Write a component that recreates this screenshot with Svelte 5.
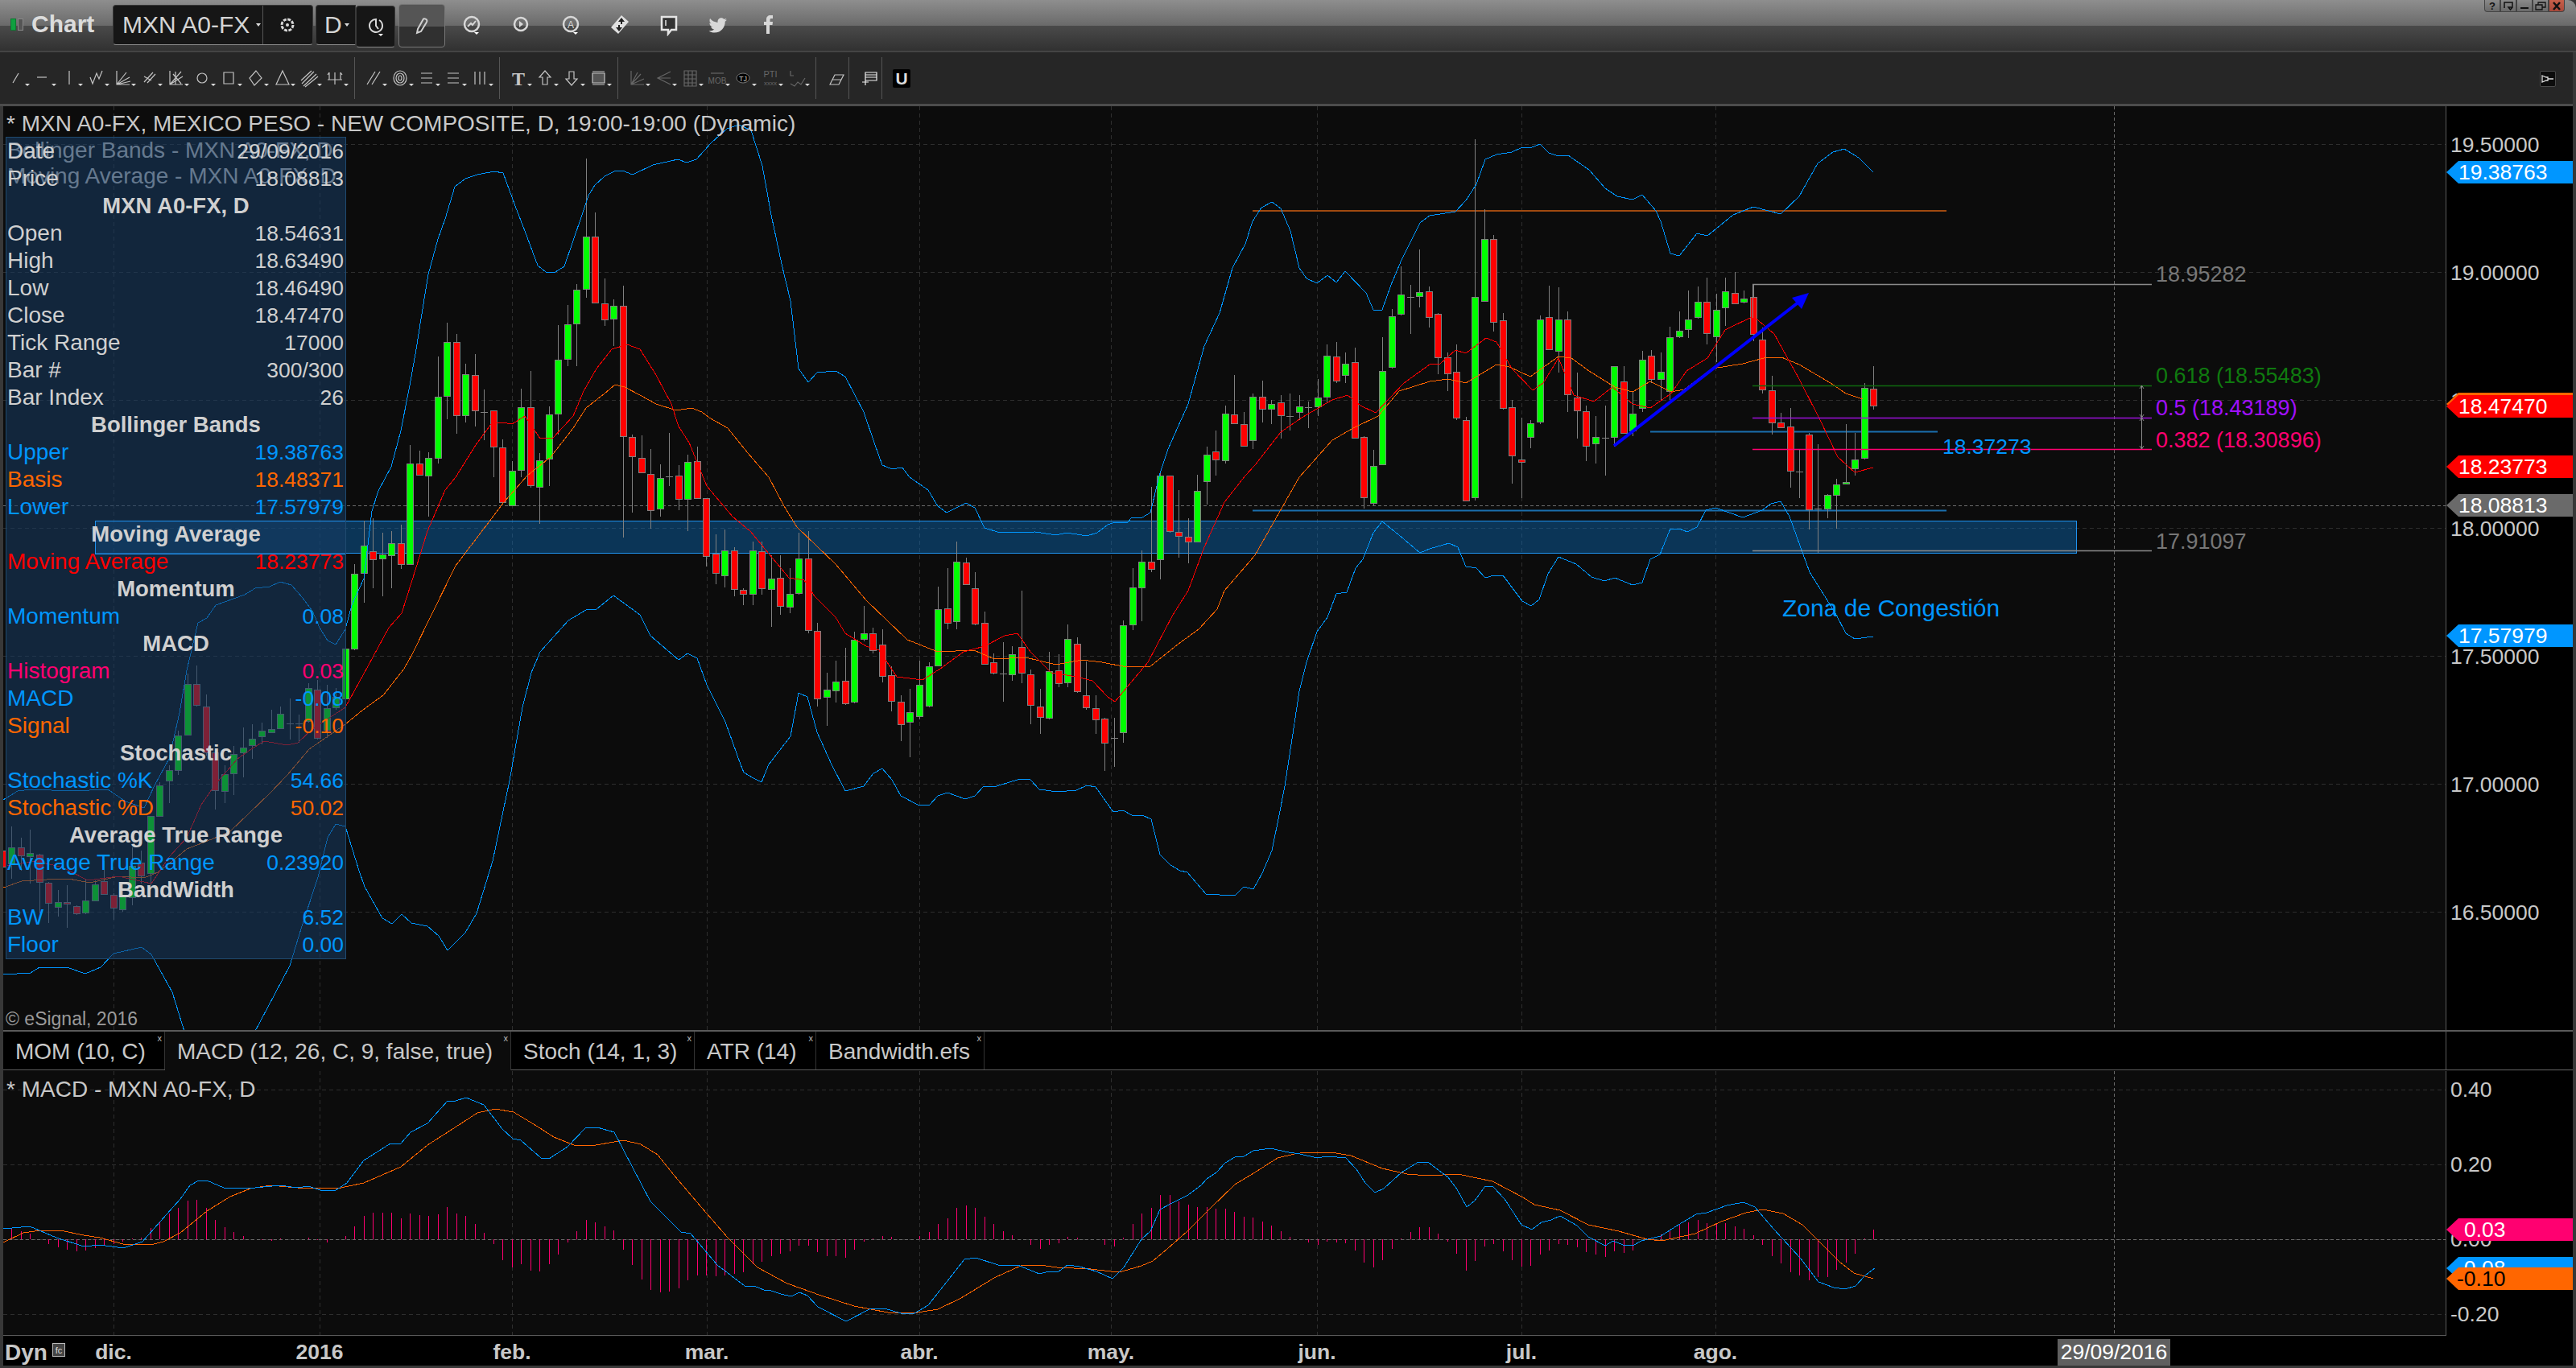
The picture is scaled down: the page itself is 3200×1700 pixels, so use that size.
<script>
  // x of bar n on the time axis
  const barX = (i) => Math.round(2.8 + 11.507 * i);

  // [top, bottom, high, low, g/r/f] read off the reference at 2.45 and 1.96 px per px
  const left = [
    [900,950,860,960,'r'],[890,940,825,985,'g'],[890,915,860,960,'r'],[907,917,835,1000,'g'],[912,995,910,1090,'r'],
    [998,1060,995,1120,'r'],[1057,1072,1020,1100,'g'],[1057,1062,1005,1135,'r'],[1067,1090,1065,1095,'r'],[1052,1088,985,1092,'g'],
    [1002,1050,990,1052,'g'],[993,1033,930,1035,'r'],[1035,1075,1030,1110,'r'],[1040,1080,1000,1085,'g'],[945,1040,890,1065,'g'],
    [935,973,900,1000,'r'],[795,968,795,1005,'g'],[700,793,690,795,'g'],[655,687,640,755,'g'],[550,655,535,670,'g'],
    [393,547,360,550,'g'],[393,457,335,460,'r'],[460,600,425,610,'r'],[600,716,600,775,'r'],[667,718,640,755,'g'],
    [605,665,580,730,'g'],[585,600,525,675,'g'],[558,578,515,620,'g'],[535,552,510,575,'g'],[528,538,470,540,'g'],
    [483,526,460,530,'g'],[513,513,435,560,'f'],[513,513,485,570,'f'],[405,505,390,510,'g'],[410,557,380,560,'r'],
    [465,530,395,555,'g'],[430,463,405,470,'g'],[285,438,280,440,'g']
  ].map((c) => [...c.slice(0, 4).map((v) => 690 + v / 2.45), c[4]]);

  const rest = [
    [1065,1248,1040,1250,'g'],[995,1062,935,1135,'g'],[1010,1030,930,1100,'r'],[1017,1026,965,1120,'g'],[990,1020,960,1100,'g'],
    [990,1040,945,1052,'r'],[795,1040,750,1042,'g'],[795,822,765,825,'r'],[783,826,768,925,'g'],[633,782,535,795,'g'],
    [500,632,453,688,'g'],[500,678,480,723,'r'],[579,678,553,695,'g'],[581,668,530,705,'r'],[670,670,615,738,'f'],
    [667,756,690,830,'r'],[756,890,736,892,'r'],[814,898,790,900,'g'],[659,812,613,830,'g'],[659,850,570,855,'r'],
    [787,852,770,942,'g'],[677,785,657,850,'g'],[542,673,458,725,'g'],[456,540,410,558,'g'],[372,454,358,558,'g'],
    [243,370,52,392,'g'],[243,403,185,405,'r'],[405,444,345,460,'r'],[411,442,395,510,'g'],[411,728,362,977,'r'],
    [732,780,725,915,'r'],[783,818,728,820,'r'],[822,910,760,955,'r'],[832,907,798,925,'g'],[827,827,722,850,'f'],
    [826,882,800,910,'r'],[791,882,775,960,'g'],[789,880,755,882,'r'],[881,1023,881,1047,'r'],[1015,1062,968,1090,'r'],
    [1008,1068,957,1098,'g'],[1008,1102,1000,1120,'r'],[1104,1114,1100,1140,'r'],[1008,1114,985,1140,'g'],[1010,1100,985,1115,'r'],
    [1077,1102,1020,1193,'g'],[1075,1143,1020,1165,'r'],[1114,1146,1050,1160,'g'],[1028,1112,965,1115,'g'],[1028,1202,960,1210,'r'],
    [1204,1368,1183,1388,'r'],[1346,1364,1305,1435,'g'],[1326,1348,1276,1378,'g'],[1324,1378,1245,1383,'r'],[1225,1375,1205,1380,'g'],
    [1210,1224,1143,1228,'g'],[1210,1252,1195,1258,'r'],[1236,1312,1200,1328,'r'],[1312,1374,1290,1400,'r'],[1375,1430,1360,1472,'r'],
    [1402,1426,1345,1512,'g'],[1334,1410,1275,1420,'g'],[1289,1385,1280,1390,'g'],[1150,1287,1095,1290,'g'],[1148,1183,1050,1200,'r'],
    [1034,1180,985,1200,'g'],[1036,1088,1025,1090,'r'],[1099,1186,1060,1190,'r'],[1183,1282,1156,1285,'r'],[1280,1306,1258,1310,'r'],
    [1308,1308,1230,1375,'f'],[1261,1310,1240,1325,'g'],[1242,1304,1105,1330,'r'],[1310,1385,1298,1430,'r'],[1387,1412,1345,1455,'r'],
    [1302,1416,1255,1420,'g'],[1300,1332,1260,1340,'r'],[1224,1330,1188,1340,'g'],[1234,1350,1220,1355,'r'],[1360,1390,1278,1395,'r'],
    [1391,1418,1360,1455,'r'],[1418,1476,1415,1545,'r'],[1464,1464,1415,1535,'f'],[1190,1450,1178,1475,'g'],
    [1097,1188,1050,1202,'g'],[1034,1097,1008,1180,'g'],[1034,1052,852,1060,'r'],[826,1030,820,1078,'g'],[826,962,826,964,'r'],
    [963,973,860,1025,'r'],[975,987,930,1038,'r'],[863,987,823,987,'g'],[775,840,755,895,'g'],[767,787,715,825,'r'],
    [675,789,655,795,'g'],[677,698,580,700,'r'],[700,752,670,755,'r'],[634,740,625,760,'g'],[634,663,593,695,'r'],
    [650,661,640,700,'g'],[646,677,630,735,'r'],[681,681,625,715,'f'],[656,669,630,690,'g'],[658,658,645,710,'f'],
    [636,658,590,680,'g'],[534,634,505,648,'g'],[536,595,500,600,'r'],[552,579,525,600,'g'],[548,732,513,735,'r'],
    [732,879,730,905,'r'],[801,891,763,898,'g'],[571,799,488,800,'g'],[438,562,420,565,'g'],[385,432,315,435,'g'],
    [391,391,360,480,'f'],[379,389,275,415,'g'],[377,439,365,465,'r'],[432,538,430,578,'r'],[538,577,525,620,'r'],
    [573,685,505,690,'r'],[689,885,682,887,'r'],[391,880,5,885,'g'],[248,398,177,400,'g'],[248,450,240,475,'r'],
    [446,660,430,665,'r'],[658,775,640,845,'r'],[785,791,685,880,'r'],[697,730,690,758,'g'],[444,693,435,700,'g'],
    [440,518,363,520,'r'],[444,520,367,575,'g'],[444,626,425,670,'r'],[636,667,575,735,'r'],[669,754,655,790,'r'],
    [731,746,680,795,'g'],[733,733,655,825,'f'],[558,730,558,755,'g'],[595,720,558,722,'r'],[675,717,620,730,'g'],
    [542,660,522,670,'g'],[534,590,520,600,'r'],[573,591,525,640,'g'],[489,621,463,640,'g'],[473,487,425,490,'g'],
    [445,469,375,490,'g'],[402,440,365,442,'g'],[401,478,343,505,'r'],[422,487,382,548,'g'],[377,417,343,460,'g'],
    [381,407,330,408,'r'],[393,401,375,405,'g'],[391,481,360,497,'r'],[493,614,465,625,'r'],[618,696,582,725,'r'],
    [695,707,672,710,'r'],[705,812,660,855,'r'],[815,815,760,880,'f'],[726,908,722,957,'r'],[906,906,748,1013,'f'],
    [873,907,870,930,'g'],[846,871,833,955,'g'],[840,844,700,845,'g'],[785,807,722,825,'g'],[612,783,600,785,'g'],
    [614,656,558,665,'r']
  ].map((c) => [...c.slice(0, 4).map((v) => 170 + v / 1.96), c[4]]);

  const candles = [...left, ...rest].map(([top, bot, hi, lo, kind], i) => ({
    x: barX(i),
    top: Math.round(top),
    h: Math.max(Math.round(bot - top), 1),
    hi: Math.round(hi),
    lo: Math.round(lo),
    kind
  }));

  const upper = '4,994 22,983 38,981 89,983 134,981 156,996 179,1004 192,976 210,943 223,886 232,833 246,774 257,768 268,752 304,739 317,731 335,729 348,723 362,727 376,743 388,759 397,780 407,796 417,801 429,782 437,752 452,719 462,635 470,610 486,580 498,535 509,479 517,434 523,396 532,341 544,297 553,272 565,232 578,222 593,217 614,213 625,215 640,256 652,287 668,330 678,338 690,338 701,331 722,270 731,243 739,230 751,219 763,213 773,212 786,217 811,205 842,198 853,202 865,198 884,177 903,160 918,155 933,162 947,206 958,267 971,328 982,374 992,458 1004,475 1015,463 1038,461 1050,468 1073,512 1086,550 1096,578 1108,583 1121,581 1130,593 1153,609 1165,629 1176,637 1200,625 1211,631 1223,656 1242,662 1286,661 1312,665 1325,662 1350,666 1363,662 1376,652 1385,649 1400,650 1406,643 1419,643 1429,637 1441,588 1451,558 1476,502 1496,430 1515,389 1531,333 1547,303 1556,275 1567,258 1580,251 1591,259 1603,287 1614,333 1623,346 1636,352 1649,342 1660,351 1671,337 1697,364 1706,385 1717,385 1728,354 1741,323 1764,277 1776,268 1808,263 1821,249 1834,229 1845,198 1859,192 1878,189 1891,183 1901,184 1913,179 1924,190 1936,194 1948,193 1974,211 1994,234 2009,244 2028,248 2040,242 2057,262 2063,275 2075,315 2086,318 2108,290 2121,293 2153,267 2178,257 2212,266 2235,244 2258,203 2277,189 2291,185 2309,196 2327,214';
  const lower = '4,1211 38,1209 49,1202 83,1202 106,1210 125,1202 141,1185 176,1177 188,1186 214,1233 230,1285 315,1285 360,1200 375,1151 395,1090 407,1041 417,1024 429,1027 446,1082 453,1102 475,1141 487,1148 499,1136 511,1147 531,1151 545,1163 556,1181 578,1159 592,1135 612,1070 633,970 649,879 660,836 671,810 706,771 728,758 741,757 762,740 795,764 808,790 843,820 854,812 866,818 878,851 901,897 920,950 924,960 936,967 946,972 955,950 968,933 982,915 992,861 1003,866 1015,910 1033,950 1050,983 1073,977 1085,961 1096,955 1108,969 1119,989 1140,1000 1154,1001 1165,989 1177,985 1199,993 1211,989 1222,977 1235,978 1257,971 1268,968 1280,969 1291,981 1314,984 1337,982 1350,976 1361,978 1383,1009 1395,1007 1406,1013 1419,1013 1430,1018 1441,1062 1454,1075 1466,1082 1475,1084 1498,1111 1515,1112 1534,1113 1545,1102 1557,1105 1568,1085 1580,1057 1589,1013 1596,977 1604,925 1614,859 1623,823 1636,785 1649,767 1660,738 1673,736 1684,706 1693,695 1706,662 1717,648 1738,665 1764,687 1776,682 1800,675 1811,680 1821,704 1834,706 1845,718 1856,715 1867,715 1891,747 1902,753 1912,745 1923,713 1936,692 1958,701 1977,717 1993,722 2006,718 2028,727 2040,724 2050,695 2062,689 2075,657 2086,657 2096,661 2108,655 2119,634 2131,631 2165,643 2189,634 2200,626 2212,623 2223,642 2248,711 2280,762 2293,787 2304,794 2327,791';
  const basis = '4,1103 27,1095 58,1093 85,1092 112,1097 147,1089 179,1091 196,1084 214,1070 232,1055 263,1043 286,1033 308,1012 335,986 357,963 384,931 429,900 451,882 476,864 502,831 512,813 537,762 566,703 601,657 626,624 655,591 684,568 712,532 728,507 751,489 764,478 776,481 795,491 815,502 840,510 859,507 872,512 881,519 904,532 929,563 955,593 974,629 990,655 1038,701 1076,746 1127,795 1165,810 1210,808 1235,819 1274,817 1312,826 1344,820 1369,823 1400,829 1429,828 1464,800 1489,782 1512,757 1521,734 1559,690 1585,644 1614,593 1655,547 1681,532 1712,517 1738,486 1776,474 1799,471 1821,476 1859,453 1875,456 1901,468 1936,443 1952,445 1974,461 2006,481 2028,487 2050,474 2076,487 2092,484 2127,458 2165,452 2191,445 2213,444 2235,453 2274,476 2293,489 2314,496';
  const average = '9,1076 45,1070 78,1078 109,1094 147,1089 188,1098 210,1065 232,1041 250,1000 268,974 295,943 312,931 328,921 357,926 370,923 388,906 429,879 457,828 483,780 499,762 512,721 531,660 553,609 566,593 591,553 610,527 623,525 636,527 652,517 671,545 687,544 712,517 725,486 741,458 760,434 779,428 795,434 815,466 834,502 843,530 856,550 878,604 910,642 932,660 955,688 980,718 999,721 1012,741 1038,767 1050,787 1076,803 1092,808 1114,841 1146,845 1168,831 1197,810 1223,803 1248,790 1264,787 1280,810 1306,836 1337,841 1357,846 1376,866 1385,872 1400,854 1426,823 1457,764 1476,734 1496,680 1521,624 1547,591 1559,578 1591,537 1617,519 1655,497 1674,491 1690,504 1709,513 1744,476 1776,453 1789,452 1808,435 1821,439 1846,420 1859,425 1878,458 1904,485 1917,476 1936,445 1955,491 1980,499 2003,481 2028,502 2050,507 2076,489 2095,461 2121,445 2143,410 2178,393 2204,415 2235,471 2261,522 2283,568 2304,587 2327,581';

  const macd = '4,1527 37,1524 70,1538 104,1549 124,1547 153,1551 177,1543 199,1518 224,1490 236,1473 247,1467 257,1467 278,1476 307,1477 348,1473 369,1476 383,1474 398,1479 417,1479 431,1470 452,1442 485,1421 498,1421 510,1407 531,1396 556,1368 566,1368 579,1364 601,1373 624,1403 637,1415 647,1417 672,1439 682,1440 705,1425 728,1401 742,1401 763,1407 808,1493 846,1531 858,1533 891,1572 925,1598 937,1598 949,1603 958,1604 970,1608 983,1611 993,1606 1003,1610 1016,1624 1051,1642 1082,1626 1099,1626 1119,1632 1136,1632 1153,1622 1176,1593 1198,1565 1212,1563 1240,1572 1264,1572 1291,1583 1303,1580 1315,1580 1326,1572 1341,1574 1362,1580 1382,1589 1396,1575 1418,1540 1429,1530 1441,1503 1454,1496 1476,1485 1492,1473 1499,1465 1511,1457 1522,1445 1534,1438 1545,1437 1557,1430 1578,1427 1601,1432 1615,1434 1636,1439 1649,1437 1661,1438 1671,1438 1685,1453 1696,1470 1708,1482 1719,1477 1741,1457 1762,1444 1775,1445 1799,1463 1810,1478 1822,1500 1832,1492 1845,1474 1855,1475 1869,1490 1890,1522 1903,1528 1915,1519 1927,1516 1938,1511 1959,1523 1973,1537 1994,1548 2004,1542 2016,1547 2028,1548 2039,1542 2063,1536 2085,1522 2107,1509 2120,1507 2145,1498 2166,1494 2180,1500 2203,1527 2236,1563 2259,1593 2278,1600 2292,1602 2305,1598 2317,1585 2329,1576';
  const signal = '4,1544 29,1532 50,1529 75,1529 104,1535 124,1538 153,1546 187,1547 203,1543 224,1532 257,1505 286,1487 311,1477 336,1473 369,1476 419,1477 452,1470 498,1450 531,1423 556,1407 593,1383 615,1378 638,1382 663,1397 688,1413 713,1423 734,1424 775,1417 796,1422 817,1435 837,1460 871,1500 904,1538 941,1575 978,1595 1020,1610 1061,1623 1103,1631 1140,1631 1165,1627 1194,1613 1235,1588 1268,1573 1282,1572 1292,1572 1313,1575 1355,1577 1380,1580 1394,1580 1418,1573 1432,1567 1450,1552 1475,1530 1503,1502 1534,1472 1562,1455 1587,1439 1608,1434 1622,1432 1654,1432 1678,1436 1717,1452 1748,1459 1773,1461 1811,1459 1854,1468 1892,1488 1906,1497 1938,1504 1973,1522 2011,1530 2046,1540 2064,1542 2106,1533 2138,1518 2169,1507 2190,1503 2215,1508 2239,1522 2260,1543 2285,1568 2303,1582 2327,1589';

  // histogram height in px above (+) or below (-) the zero line, from bar 1 on
  const hist = [14,10,7,0,-6,-10,-13,-15,-14,-11,-8,-6,-3,1,2,14,22,32,39,48,49,39,24,15,9,4,0,-1,-2,1,0,0,2,-1,-4,0,4,16,29,33,33,33,26,32,30,29,31,40,32,29,19,8,-6,-26,-35,-31,-39,-40,-31,-19,-4,10,24,21,16,11,-13,-32,-50,-63,-66,-65,-61,-51,-45,-45,-46,-45,-43,-41,-31,-28,-21,-18,-15,-8,-8,-16,-21,-21,-23,-13,-3,1,4,3,0,0,4,9,19,26,39,42,39,28,19,10,5,0,-7,-12,-7,-5,3,2,0,0,-7,-9,2,19,32,39,55,55,47,43,40,40,38,38,34,28,27,22,17,10,3,0,-4,-7,-3,-4,-5,-14,-29,-35,-26,-12,1,9,15,15,7,-3,-18,-39,-27,-9,-6,-15,-26,-34,-33,-19,-14,-6,-7,-10,-16,-19,-22,-15,-17,-14,0,0,6,10,18,21,24,20,19,20,16,13,5,-7,-21,-30,-41,-45,-51,-47,-47,-38,-29,-18,1,12];

  const monthX = [141, 397, 636, 878, 1142, 1380, 1636, 1890, 2131];
  const months = ['dic.', '2016', 'feb.', 'mar.', 'abr.', 'may.', 'jun.', 'jul.', 'ago.'];
  const priceGrid = [
    [179.5, '19.50000'], [338.5, '19.00000'], [497.5, '18.50000'], [656.5, '18.00000'],
    [815.5, '17.50000'], [974.5, '17.00000'], [1133.5, '16.50000']
  ];
  const macdGrid = [[1354, '0.40'], [1447, '0.20'], [1540, '0.00'], [1633, '-0.20']];

  const tag = (y) => `3039,${y + 14} 3054,${y} 3196,${y} 3196,${y + 28} 3054,${y + 28}`;
  const priceTags = [
    { y: 200, fill: '#0096ff', label: '19.38763' },
    { y: 488, fill: '#ff6600', label: '18.48371' },
    { y: 491, fill: '#ff0000', label: '18.47470' },
    { y: 566, fill: '#ff0000', label: '18.23773' },
    { y: 614, fill: '#6a6a6a', label: '18.08813' },
    { y: 776, fill: '#0096ff', label: '17.57979' }
  ];
  const macdTags = [
    { y: 1514, fill: '#ff0070', label: '0.03', ink: '#fff', tx: 3061 },
    { y: 1562, fill: '#0096ff', label: '-0.08', ink: '#fff', tx: 3052 },
    { y: 1575, fill: '#ff6600', label: '-0.10', ink: '#000', tx: 3052 }
  ];

  const fibs = [
    { y: 353, ink: '#777', line: '#8a8a8a', label: '18.95282', ty: 341 },
    { y: 479, ink: '#0f7a0f', line: '#0f6a0f', label: '0.618 (18.55483)', ty: 467 },
    { y: 519, ink: '#a010ff', line: '#9a10d8', label: '0.5 (18.43189)', ty: 507 },
    { y: 558, ink: '#ff0070', line: '#ff0070', label: '0.382 (18.30896)', ty: 547 },
    { y: 684, ink: '#777', line: '#8a8a8a', label: '17.91097', ty: 673 }
  ];

  const rows = [
    { l: 'Date', v: '29/09/2016' }, { l: 'Price', v: '18.08813' }, { h: 'MXN A0-FX, D' },
    { l: 'Open', v: '18.54631' }, { l: 'High', v: '18.63490' }, { l: 'Low', v: '18.46490' },
    { l: 'Close', v: '18.47470' }, { l: 'Tick Range', v: '17000' }, { l: 'Bar #', v: '300/300' },
    { l: 'Bar Index', v: '26' }, { h: 'Bollinger Bands' },
    { l: 'Upper', v: '19.38763', c: 'blue' }, { l: 'Basis', v: '18.48371', c: 'orange' }, { l: 'Lower', v: '17.57979', c: 'blue' },
    { h: 'Moving Average' }, { l: 'Moving Average', v: '18.23773', c: 'red' },
    { h: 'Momentum' }, { l: 'Momentum', v: '0.08', c: 'blue' },
    { h: 'MACD' }, { l: 'Histogram', v: '0.03', c: 'pink' }, { l: 'MACD', v: '-0.08', c: 'blue' }, { l: 'Signal', v: '-0.10', c: 'orange' },
    { h: 'Stochastic' }, { l: 'Stochastic %K', v: '54.66', c: 'blue' }, { l: 'Stochastic %D', v: '50.02', c: 'orange' },
    { h: 'Average True Range' }, { l: 'Average True Range', v: '0.23920', c: 'blue' },
    { h: 'BandWidth' }, { l: 'BW', v: '6.52', c: 'blue' }, { l: 'Floor', v: '0.00', c: 'blue' }
  ];

  const tabs = [
    { label: 'MOM (10, C)', w: 201 },
    { label: 'MACD (12, 26, C, 9, false, true)', w: 430, active: true },
    { label: 'Stoch (14, 1, 3)', w: 228 },
    { label: 'ATR (14)', w: 151 },
    { label: 'Bandwidth.efs', w: 209 }
  ];

  const drawGroups = [
    [
      { d: 'M11 21L18 9' }, { d: 'M8 14H20' }, { d: 'M15 6V23' }, { d: 'M8 14L11 22L16 9L19 16L23 6' },
      { d: 'M8 6V23H24M8 23L20 8M8 23L24 14M8 23L25 19' }, { d: 'M9 20L20 8M13 21L23 10M9 13L18 18' },
      { d: 'M8 6V23H24M8 23L22 7M8 23L24 13M12 10L22 22M15 7V23' }, { d: 'M21 15a6 6 0 1 1-12 0a6 6 0 1 1 12 0' },
      { d: 'M9 8h12v14H9z' }, { d: 'M16 6L23 15L14 24L8 15z' }, { d: 'M16 6L24 23H8z' },
      { d: 'M7 22L22 7M9 25L25 10M11 26L27 13M6 18L19 6' }, { d: 'M8 8V17M15 8V23M22 8V17M6 17H24M8 8L6 11M22 8L24 11' }
    ],
    [
      { d: 'M7 23L17 7M13 23L23 7' },
      { d: 'M23 15a8 9 0 1 1-16 0a8 9 0 1 1 16 0M20 15a5 6 0 1 1-10 0a5 6 0 1 1 10 0M17 15a2 3 0 1 1-4 0a2 3 0 1 1 4 0' },
      { d: 'M8 9H22M8 15H22M8 21H22' }, { d: 'M8 9H22M8 15H22M8 21H22' }, { d: 'M9 7V23M15 7V23M21 7V23' }
    ],
    [
      { t: 'T', x: 15, y: 24, size: 24, serif: true }, { d: 'M15 6L22 14H18V23H12V14H8z' },
      { d: 'M12 7H18V16H22L15 24L8 16H12z' }, { d: 'M8 7H23M8 23H23', box: 'M8 9H23V21H8z' }
    ],
    [
      { d: 'M8 6V23H24M8 23L20 10M8 23L16 8M8 23L24 16', dim: true }, { d: 'M24 7L8 15L24 23M8 15H24', dim: true },
      { d: 'M8 6h15v19H8zM8 11h15M8 16h15M8 21h15M13 6v19M18 6v19', dim: true },
      { d: 'M8 9H24', dim: true, t: 'MOB', x: 16, y: 22, size: 10 }, { blob: true, t: 'TJ', x: 15, y: 19, size: 9 },
      { d: '', dim: true, t: 'PTI', x: 16, y: 14, size: 11, t2: 'xxxx' }, { d: 'M8 6v6h4M8 22l5 3 4-5 4 3 5-8', dim: true }
    ]
  ];
</script>

<div class="window">
  <header class="titlebar">
    <span class="led on"></span>
    <span class="led"></span>
    <span class="app">Chart</span>
    <div class="field symbol">
      <span>MXN A0-FX</span>
      <i class="caret"></i>
      <div class="gear">
        <svg width="24" height="24" viewBox="0 0 24 24"><circle cx="12" cy="12" r="7" fill="none" stroke="#d8d8d8" stroke-width="3" stroke-dasharray="4 1.5" /><circle cx="12" cy="12" r="2" fill="#d8d8d8" /></svg>
      </div>
    </div>
    <div class="field interval"><span>D</span><i class="caret"></i></div>
    <div class="field square">
      <svg width="24" height="28" viewBox="0 0 24 28"><path d="M13 5a8 8 0 1 0 3 1M12 6v7l3 4" fill="none" stroke="#d8d8d8" stroke-width="2" /><path d="M15 23h6l-3 3z" fill="#fff" /></svg>
    </div>
    <div class="field pencil">
      <svg width="24" height="24" viewBox="0 0 24 24"><path d="M7 16L14 3.5Q16 2.500 18 4.500Q19 6 18 7.500L11 19L6 21z" fill="none" stroke="#d0d0d0" stroke-width="2" /></svg>
    </div>
    <div class="actions">
      <svg width="24" height="28" viewBox="0 0 24 28"><circle cx="12" cy="13" r="9" fill="none" stroke="#d8d8d8" stroke-width="2.500" /><path d="M7 16l4-4 2 2 4-5" fill="none" stroke="#d8d8d8" stroke-width="2" /><path d="M15 23h6l-3 3z" fill="#fff" /></svg>
      <svg width="24" height="28" viewBox="0 0 24 28"><circle cx="12" cy="13" r="8" fill="none" stroke="#d8d8d8" stroke-width="2.500" /><path d="M10 9l5 4-5 4z" fill="#d8d8d8" /></svg>
      <svg width="24" height="28" viewBox="0 0 24 28"><circle cx="12" cy="13" r="9" fill="none" stroke="#d8d8d8" stroke-width="2.500" /><text x="12" y="18" class="glyph" text-anchor="middle">A</text><path d="M15 23h6l-3 3z" fill="#fff" /></svg>
      <svg width="24" height="28" viewBox="0 0 24 28"><path d="M14 2L23 10L10 25L1 17z" fill="#e0e0e0" /><path d="M14 5l-4 5h3v3h2v-3h3zM11 22l4-5h-3v-3h-2v3H7z" fill="#222" /></svg>
      <svg width="24" height="28" viewBox="0 0 24 28"><path d="M3 4H21V20H15L11 25V20H3z" fill="#333" stroke="#e4e4e4" stroke-width="2.500" /><path d="M8 8V15" stroke="#e4e4e4" stroke-width="1.500" /></svg>
      <svg width="24" height="28" viewBox="0 0 24 24"><path d="M23 5.500c-.8.4-1.700.6-2.600.7.9-.6 1.600-1.400 2-2.500-.9.5-1.900.9-2.900 1.100C18.600 3.900 17.400 3.300 16.100 3.300c-2.500 0-4.600 2.100-4.600 4.600 0 .4 0 .7.1 1C7.800 8.700 4.400 6.900 2.100 4.100c-.4.7-.6 1.500-.6 2.300 0 1.600.8 3 2 3.800-.8 0-1.500-.2-2.100-.6v.1c0 2.200 1.600 4.100 3.700 4.500-.4.1-.8.2-1.200.2-.3 0-.6 0-.9-.1.6 1.800 2.300 3.200 4.300 3.200-1.600 1.200-3.600 2-5.700 2-.4 0-.7 0-1.100-.1 2 1.300 4.500 2.100 7.100 2.100 8.500 0 13.100-7 13.100-13.100v-.6c.9-.6 1.700-1.500 2.300-2.400z" fill="#d8d8d8" /></svg>
      <svg width="24" height="28" viewBox="0 0 24 28"><path d="M10 25V14H7V10h3V7c0-3 2-5 5-5h3v4h-2c-1 0-1.500.5-1.500 1.500V10H18l-.5 4h-3.500v11z" fill="#d8d8d8" /></svg>
    </div>
    <div class="winbtns">
      <button>?</button>
      <button><svg width="12" height="11" viewBox="0 0 12 11"><path d="M1 8V1H11V6M6 7h5l-2.500 3z" fill="none" stroke="#111" stroke-width="1.500" /></svg></button>
      <button><svg width="12" height="11" viewBox="0 0 12 11"><path d="M1 8H11" stroke="#111" stroke-width="2" /></svg></button>
      <button><svg width="14" height="11" viewBox="0 0 14 11"><path d="M1 4H9V10H1zM4 4V1H13V7H9" fill="none" stroke="#111" stroke-width="1.300" /></svg></button>
      <button class="close"><svg width="12" height="11" viewBox="0 0 12 11"><path d="M2 1L10 10M10 1L2 10" stroke="#111" stroke-width="2.500" /></svg></button>
    </div>
  </header>

  <div class="toolbar">
    {#each drawGroups as group, g}
      <div class="tools" class:first={g === 0}>
        {#each group as tool}
          <svg class="tool" class:dim={tool.dim} width="33" height="30" viewBox="0 0 33 30">
            {#if tool.box}<path d={tool.box} fill="#555" />{/if}
            {#if tool.blob}<ellipse cx="15" cy="15" rx="8" ry="6" fill="#000" stroke="#777" />{/if}
            {#if tool.d}<path d={tool.d} fill="none" />{/if}
            {#if tool.t}<text x={tool.x} y={tool.y} text-anchor="middle" font-size={tool.size} class:serif={tool.serif}>{tool.t}</text>{/if}
            {#if tool.t2}<text x="16" y="24" text-anchor="middle" font-size="8">{tool.t2}</text>{/if}
            <path class="tri" d="M26 22h6l-3 3z" />
          </svg>
        {/each}
      </div>
      <span class="sep"></span>
    {/each}
    <div class="tools single">
      <svg class="tool" width="33" height="30" viewBox="0 0 33 30"><path d="M9 23L15 11H26L20 23zM12 17H23" fill="none" /></svg>
    </div>
    <span class="sep"></span>
    <div class="tools single">
      <svg class="tool bright" width="33" height="30" viewBox="0 0 33 30"><path d="M12 8H26V18H12zM12 11H26M12 14H26M8 20H16M12 18V24" fill="none" stroke-width="2" /></svg>
    </div>
    <span class="sep"></span>
    <span class="magnet">U</span>
    <span class="pin">
      <svg width="16" height="12" viewBox="0 0 16 12"><path d="M1 2L6 4H8V8H6L1 10zM8 6H15" fill="none" stroke="#ddd" stroke-width="1.300" /></svg>
    </span>
  </div>

  <div class="panes">
    <div class="main">
      <svg class="chart" width="3192" height="1148" viewBox="4 132 3192 1148">
        {#each priceGrid as [y]}
          <line x1="4" x2="3042" y1={y} y2={y} class="grid" />
        {/each}
        {#each monthX as x}
          <line x1={x + 0.5} x2={x + 0.5} y1="132" y2="1280" class="grid" />
        {/each}
        <line x1="2626.5" x2="2626.5" y1="132" y2="1280" class="cursor" />
        <line x1="4" x2="3038" y1="628.5" y2="628.5" class="cursor" />

        <rect x="118.500" y="647.500" width="2461" height="40" fill="rgba(9, 115, 200, 0.4)" stroke="#1f93f0" />

        <line x1="1556" x2="2418" y1="262" y2="262" stroke="#a04a10" stroke-width="2" />
        <line x1="2050" x2="2407" y1="536.500" y2="536.500" stroke="#1a6fae" stroke-width="2" />
        <line x1="1556" x2="2418" y1="634.500" y2="634.500" stroke="#1a6fae" stroke-width="2" />

        {#each candles as c}
          <line x1={c.x + 0.5} x2={c.x + 0.5} y1={c.hi} y2={c.lo} class="wick" />
          {#if c.kind === 'f'}
            <line x1={c.x - 4} x2={c.x + 5} y1={c.top + 0.5} y2={c.top + 0.5} class="wick" />
          {:else}
            <rect x={c.x - 3.5} y={c.top + 0.5} width="8" height={c.h} class={c.kind === 'g' ? 'up' : 'down'} />
          {/if}
        {/each}

        <polyline points={upper} class="trace blue" />
        <polyline points={lower} class="trace blue" />
        <polyline points={basis} class="trace orange" />
        <polyline points={average} class="trace red" />

        <path d="M2005 554L2240 371" stroke="#0000ff" stroke-width="4" />
        <path d="M2247 364L2226 370L2238 384z" fill="#0000ff" />

        {#each fibs as f}
          <line x1="2177" x2="2673" y1={f.y + 0.5} y2={f.y + 0.5} stroke={f.line} stroke-width="1.500" />
          <text x="2678" y={f.ty} class="label wide" dominant-baseline="central" fill={f.ink}>{f.label}</text>
        {/each}
        <line x1="2177.500" x2="2177.500" y1="353" y2="395" stroke="#8a8a8a" />
        <line x1="2660.500" x2="2660.500" y1="479" y2="558" stroke="#8a8a8a" />
        <path d="M2658 483l2.500-4 2.500 4M2658 515l2.500 4 2.500-4M2658 523l2.500-4 2.500 4M2658 554l2.500 4 2.500-4" fill="none" stroke="#8a8a8a" />

        <text x="2413" y="555" class="label blue-ink" dominant-baseline="central">18.37273</text>
        <text x="2214" y="755" class="blue-ink zone" dominant-baseline="central">Zona de Congestión</text>

        <text x="8" y="153" class="lead soft" dominant-baseline="central">* MXN A0-FX, MEXICO PESO - NEW COMPOSITE, D, 19:00-19:00 (Dynamic)</text>
        <text x="9" y="186" class="lead soft" dominant-baseline="central">Bollinger Bands - MXN A0-FX, D</text>
        <text x="9" y="218" class="lead soft" dominant-baseline="central">Moving Average - MXN A0-FX, D</text>
        <text x="7" y="1266" class="copy" dominant-baseline="central">© eSignal, 2016</text>

        <rect x="3038" y="132" width="158" height="1148" fill="#000" />
        <line x1="3038.500" x2="3038.500" y1="132" y2="1280" class="axis" />
        {#each priceGrid as [y, label]}
          <text x="3044" {y} class="label soft" dominant-baseline="central">{label}</text>
        {/each}
        {#each priceTags as t}
          <polygon points={tag(t.y)} fill={t.fill} />
          <text x="3054" y={t.y + 14} class="label white" dominant-baseline="central">{t.label}</text>
        {/each}
      </svg>

      <div class="readout">
        <div class="zone-band"></div>
        {#each rows as row}
          {#if row.h}
            <div class="head">{row.h}</div>
          {:else}
            <div class="row {row.c ?? ''}"><span class="name">{row.l}</span><span>{row.v}</span></div>
          {/if}
        {/each}
      </div>
    </div>

    <nav class="tabs">
      {#each tabs as tab}
        <div class="tab" class:active={tab.active} style="width: {tab.w}px">{tab.label}<i>x</i></div>
      {/each}
      <div class="tab-fill"></div>
      <div class="tab-axis"></div>
    </nav>

    <svg class="chart" width="3192" height="330" viewBox="4 1330 3192 330">
      {#each macdGrid as [y]}
        <line x1="4" x2="3042" y1={y + 0.5} y2={y + 0.5} class="grid" />
      {/each}
      {#each monthX as x}
        <line x1={x + 0.5} x2={x + 0.5} y1="1331" y2="1660" class="grid" />
      {/each}
      <line x1="2626.5" x2="2626.5" y1="1331" y2="1660" class="cursor" />
      <line x1="4" x2="3038" y1="1540.5" y2="1540.5" class="cursor" />
      {#each hist as h, i}
        {#if h !== 0}
          <line x1={barX(i + 1) + 0.5} x2={barX(i + 1) + 0.5} y1="1540" y2={1540 - h} stroke="#ff0070" />
        {/if}
      {/each}
      <polyline points={signal} class="trace orange" />
      <polyline points={macd} class="trace blue" />
      <text x="8" y="1353" class="lead soft" dominant-baseline="central">* MACD - MXN A0-FX, D</text>

      <rect x="3038" y="1331" width="158" height="329" fill="#000" />
      <line x1="4" x2="3038" y1="1659.500" y2="1659.500" class="axis" />
      <line x1="3038.500" x2="3038.500" y1="1331" y2="1660" class="axis" />
      {#each macdGrid as [y, label]}
        <text x="3044" {y} class="label soft" dominant-baseline="central">{label}</text>
      {/each}
      {#each macdTags as t}
        <polygon points={tag(t.y)} fill={t.fill} />
        <text x={t.tx} y={t.y + 14} class="label" fill={t.ink} dominant-baseline="central">{t.label}</text>
      {/each}
    </svg>

    <svg class="chart dates" width="3192" height="37" viewBox="4 1660 3192 37">
      <text x="6" y="1680" class="month dyn" dominant-baseline="central">Dyn</text>
      <rect x="65.500" y="1669.500" width="15" height="16" fill="#444" stroke="#bbb" />
      <text x="73" y="1682" class="tiny" text-anchor="middle">fc</text>
      {#each monthX as x, i}
        <text {x} y="1680" class="month" text-anchor="middle" dominant-baseline="central">{months[i]}</text>
      {/each}
      <rect x="2556" y="1664" width="140" height="33" fill="#5f5f5f" />
      <text x="2626" y="1680" class="label white" text-anchor="middle" dominant-baseline="central">29/09/2016</text>
    </svg>
  </div>
</div>

<style>
  :global(body) {
    margin: 0;
    background: #000;
  }

  .window {
    width: 3200px;
    height: 1700px;
    display: flex;
    flex-direction: column;
    background: #383838;
    font-family: 'Liberation Sans', Arial, sans-serif;
    color: #c8c8c8;
    overflow: hidden;
  }

  .titlebar {
    height: 63px;
    flex: none;
    display: flex;
    align-items: flex-start;
    border-radius: 0 10px 0 0;
    background: linear-gradient(#8e8e8e 0, #6a6a6a 32px, #4a4a4a 32px, #313131 63px);
    border-bottom: 2px solid #444;
    position: relative;
  }

  .led {
    width: 5px;
    height: 13px;
    margin-top: 23px;
    background: #555;
    border: 1px solid #888;
    margin-right: 2px;
  }

  .led:first-child {
    margin-left: 13px;
  }

  .led.on {
    background: #10a040;
    border-color: #0c7a30;
  }

  .app {
    font-weight: bold;
    font-size: 30px;
    line-height: 34px;
    margin: 13px 0 0 8px;
    width: 101px;
    color: #dcdcdc;
  }

  .field {
    height: 50px;
    margin-top: 6px;
    display: flex;
    align-items: center;
    background: #161616;
    border: 1px solid #3a3a3a;
    border-bottom-color: #8a8a8a;
    border-radius: 4px;
    box-sizing: border-box;
    font-size: 30px;
    color: #d4d4d4;
  }

  .symbol {
    width: 249px;
    padding-left: 11px;
  }

  .symbol > span {
    width: 168px;
  }

  .gear {
    width: 60px;
    height: 100%;
    border-left: 1px solid #555;
    display: flex;
    align-items: center;
    justify-content: center;
    margin-left: 2px;
  }

  .caret {
    width: 0;
    height: 0;
    border: 3px solid transparent;
    border-top: 4px solid #ddd;
    margin-top: 3px;
    margin-left: -2px;
  }

  .interval {
    width: 50px;
    margin-left: 3px;
    padding-left: 10px;
    border-radius: 4px 0 0 4px;
  }

  .interval .caret {
    margin-left: 3px;
  }

  .square {
    width: 49px;
    height: 52px;
    margin-top: 7px;
    justify-content: center;
  }

  .pencil {
    width: 58px;
    height: 54px;
    margin-top: 5px;
    margin-left: 4px;
    justify-content: center;
    background: linear-gradient(#555 0, #555 27px, #303030 27px, #303030);
    border-color: #777;
  }

  .actions {
    display: flex;
    margin: 17px 0 0 21px;
    gap: 37.300px;
  }

  .glyph {
    font-size: 12px;
    fill: #d8d8d8;
  }

  .winbtns {
    position: absolute;
    top: 0;
    right: 14px;
    display: flex;
    height: 15px;
  }

  .winbtns button {
    width: 20px;
    height: 15px;
    padding: 0;
    display: flex;
    align-items: center;
    justify-content: center;
    background: linear-gradient(#8a8a8a, #6a6a6a);
    border: 1px solid #444;
    border-top: 0;
    font: bold 13px 'Liberation Sans', sans-serif;
    color: #111;
  }

  .winbtns button:first-child {
    border-radius: 0 0 0 4px;
  }

  .winbtns .close {
    background: linear-gradient(#c8604a, #a8483a);
    border-radius: 0 0 4px 0;
  }

  .toolbar {
    height: 64px;
    flex: none;
    margin-right: 4px;
    display: flex;
    align-items: center;
    background: #262626;
    position: relative;
    border-bottom: 3px solid #4c4c4c;
  }

  .tools {
    display: flex;
    padding: 0 0 0 8px;
    margin-right: 6px;
  }

  .tools.first {
    padding-left: 5px;
  }

  .tools.single {
    margin-right: -1px;
  }

  .tool {
    flex: none;
    color: #c4c4c4;
  }

  .tool path {
    stroke: #c4c4c4;
    stroke-width: 1.200;
  }

  .tool text {
    fill: #c4c4c4;
    font-family: 'Liberation Sans', sans-serif;
  }

  .tool text.serif {
    font-family: 'Liberation Serif', serif;
    font-weight: bold;
  }

  .tool.dim path {
    stroke: #666;
  }

  .tool.dim text {
    fill: #666;
  }

  .tool.bright path {
    stroke: #eee;
  }

  .tool path.tri {
    fill: #ddd;
    stroke: none;
  }

  .sep {
    width: 1px;
    height: 52px;
    background: #555;
    flex: none;
  }

  .magnet {
    width: 22px;
    height: 23px;
    margin-left: 13px;
    background: #000;
    border-radius: 2px;
    text-align: center;
    font: bold 21px/23px 'Liberation Sans', sans-serif;
    color: #ddd;
  }

  .pin {
    position: absolute;
    left: 3155px;
    top: 23px;
    width: 18px;
    height: 18px;
    display: flex;
    align-items: center;
    justify-content: center;
    background: #0c0c0c;
    border: 1px solid #4a4a4a;
    border-radius: 2px;
  }

  .panes {
    flex: 1;
    margin: 0 4px 3px;
    display: flex;
    flex-direction: column;
    background: #000;
  }

  .main {
    position: relative;
    height: 1148px;
    flex: none;
  }

  .chart {
    display: block;
    background: #0c0c0c;
    flex: none;
  }

  .chart text {
    font-family: 'Liberation Sans', Arial, sans-serif;
  }

  .dates {
    background: #000;
  }

  .grid {
    stroke: #2e2e2e;
    stroke-dasharray: 5 4;
  }

  .cursor {
    stroke: #6a6a6a;
    stroke-dasharray: 4 3;
  }

  .axis {
    stroke: #5a5a5a;
  }

  .wick {
    stroke: #808080;
    shape-rendering: crispEdges;
  }

  .up,
  .down {
    stroke: #808080;
    shape-rendering: crispEdges;
  }

  .up {
    fill: #00ff00;
  }

  .down {
    fill: #ff0000;
  }

  .trace {
    fill: none;
    stroke-width: 1;
    shape-rendering: crispEdges;
  }

  .trace.blue {
    stroke: #0096ff;
  }

  .trace.orange {
    stroke: #ff6600;
  }

  .trace.red {
    stroke: #ff0000;
  }

  .label {
    font-size: 26.500px;
  }

  .label.wide {
    font-size: 27px;
  }

  .lead {
    font-size: 28px;
  }

  .soft {
    fill: #c8c8c8;
  }

  .white {
    fill: #fff;
  }

  .copy {
    font-size: 23px;
    fill: #9a9a9a;
  }

  .blue-ink {
    fill: #0096ff;
  }

  .zone {
    font-size: 30px;
  }

  .month {
    font-size: 26.500px;
    font-weight: bold;
    fill: #c8c8c8;
  }

  .month.dyn {
    font-size: 28px;
  }

  .tiny {
    font-size: 11px;
    fill: #ddd;
  }

  .readout {
    position: absolute;
    left: 4px;
    top: 39px;
    width: 421px;
    height: 1020px;
    box-sizing: content-box;
    border: 1px solid #1f4a6f;
    margin: -1px;
    display: grid;
    grid-auto-rows: 34px;
    background: rgba(23, 58, 98, 0.56);
    font-size: 26.500px;
    line-height: 34px;
  }

  .zone-band {
    position: absolute;
    left: 110px;
    right: 0;
    top: 476px;
    height: 40px;
    border: 1px solid #1f93f0;
    border-right: 0;
  }

  .row {
    position: relative;
    display: flex;
    justify-content: space-between;
    padding: 0 2px 0 1px;
    color: #d0d0d0;
  }

  .row .name {
    font-size: 28px;
  }

  .head {
    position: relative;
    text-align: center;
    font-size: 27.500px;
    font-weight: bold;
    color: #d0d0d0;
  }

  .row.blue {
    color: #0096ff;
  }

  .row.orange {
    color: #ff6600;
  }

  .row.red {
    color: #ff0000;
  }

  .row.pink {
    color: #ff0070;
  }

  .tabs {
    height: 50px;
    flex: none;
    display: flex;
    background: #000;
    border-top: 2px solid #5a5a5a;
    border-bottom: 1px solid #5a5a5a;
    box-sizing: border-box;
    font-size: 28px;
    position: relative;
  }

  .tab {
    flex: none;
    box-sizing: border-box;
    padding-left: 15px;
    line-height: 49px;
    border-right: 1px solid #333;
    position: relative;
    color: #c8c8c8;
  }

  .tab.active {
    background: #0c0c0c;
    margin-bottom: -1px;
  }

  .tab i {
    position: absolute;
    right: 3px;
    top: 0;
    font-style: normal;
    font-size: 11px;
    line-height: 16px;
    color: #bbb;
  }

  .tab-fill {
    flex: 1;
  }

  .tab-axis {
    width: 158px;
    border-left: 1px solid #5a5a5a;
    box-sizing: border-box;
  }
</style>
